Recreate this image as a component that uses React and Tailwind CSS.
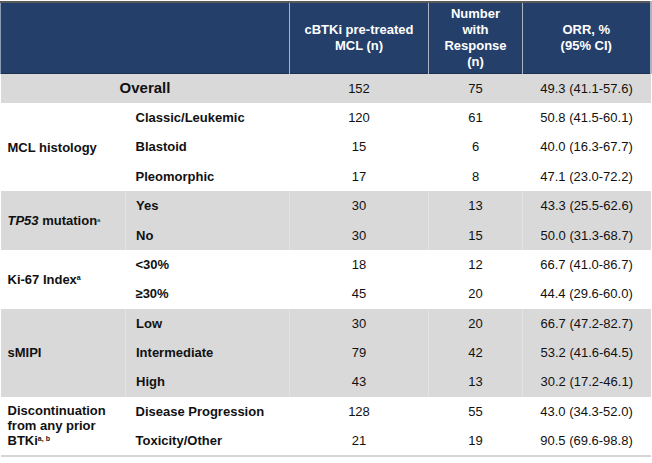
import React from 'react';

const NAVY = 'bg-[#253f6b]';

// one entry per group; rows are [label, n, responders, orr]
const GROUPS = [
  {
    label: (
      <>MCL histology</>
    ),
    shaded: false,
    rows: [
      ['Classic/Leukemic', '120', '61', '50.8 (41.5-60.1)'],
      ['Blastoid', '15', '6', '40.0 (16.3-67.7)'],
      ['Pleomorphic', '17', '8', '47.1 (23.0-72.2)'],
    ],
  },
  {
    label: (
      <>
        <i>TP53</i> mutation
        <span className="relative -top-[3px] text-[6px] font-normal leading-none">a</span>
      </>
    ),
    shaded: true,
    rows: [
      ['Yes', '30', '13', '43.3 (25.5-62.6)'],
      ['No', '30', '15', '50.0 (31.3-68.7)'],
    ],
  },
  {
    label: (
      <>
        Ki-67 Index<span className="relative -top-[4px] text-[7px] leading-none">a</span>
      </>
    ),
    shaded: false,
    rows: [
      ['<30%', '18', '12', '66.7 (41.0-86.7)'],
      ['≥30%', '45', '20', '44.4 (29.6-60.0)'],
    ],
  },
  {
    label: <>sMIPI</>,
    shaded: true,
    rows: [
      ['Low', '30', '20', '66.7 (47.2-82.7)'],
      ['Intermediate', '79', '42', '53.2 (41.6-64.5)'],
      ['High', '43', '13', '30.2 (17.2-46.1)'],
    ],
  },
  {
    label: (
      <>
        Discontinuation
        <br />
        from any prior
        <br />
        BTKi<span className="relative -top-[4px] text-[7px] leading-none">a, b</span>
      </>
    ),
    shaded: false,
    rows: [
      ['Disease Progression', '128', '55', '43.0 (34.3-52.0)'],
      ['Toxicity/Other', '21', '19', '90.5 (69.6-98.8)'],
    ],
  },
];

export default function App() {
  return (
    <div className="w-[652px] h-[463px] bg-white pt-px font-['Liberation_Sans',Arial,sans-serif] text-[13px] text-[#111]">
      <table className="w-[650px] table-fixed border-collapse">
        <colgroup>
          <col className="w-[125px]" />
          <col className="w-[164px]" />
          <col className="w-[139px]" />
          <col className="w-[94px]" />
          <col className="w-[128px]" />
        </colgroup>
        <thead>
          <tr className={`h-[71px] ${NAVY} text-white font-bold leading-[16px] border-t-2 border-t-[#5b5b5b] border-b border-b-[#1c2f50]`}>
            <th colSpan={2} className="border-l border-l-[#8b9bb5]" />
            <th className="border-l border-l-[#a9b3c3] text-center font-bold">
              cBTKi pre-treated
              <br />
              MCL (n)
            </th>
            <th className="border-l border-l-[#a9b3c3] text-center font-bold">
              Number
              <br />
              with
              <br />
              Response
              <br />
              (n)
            </th>
            <th className="border-l border-l-[#a9b3c3] border-r-2 border-r-[#a9b3c3] text-center font-bold">
              ORR, %
              <br />
              (95% CI)
            </th>
          </tr>
        </thead>
        <tbody>
          <tr className="h-[30px] bg-[#d9d9d9]">
            <td colSpan={2} className="text-center font-bold text-[15px]">
              Overall
            </td>
            <td className="text-center">152</td>
            <td className="text-center">75</td>
            <td className="text-center">49.3 (41.1-57.6)</td>
          </tr>
          {GROUPS.map((g, gi) =>
            g.rows.map((r, ri) => (
              <tr
                key={`${gi}-${ri}`}
                className={`h-[29.4px] ${g.shaded ? 'bg-[#d9d9d9]' : 'bg-white'} ${
                  gi === GROUPS.length - 1 && ri === g.rows.length - 1 ? 'border-b-2 border-b-[#d6d6d6]' : ''
                }`}
              >
                {ri === 0 && (
                  <td
                    rowSpan={g.rows.length}
                    className={`pl-[7px] font-bold leading-[15px] ${g.shaded ? 'border-r border-r-[#e3e3e3]' : ''}`}
                  >
                    {g.label}
                  </td>
                )}
                <td className={`pl-[10px] font-bold ${g.shaded ? 'border-r border-r-[#e3e3e3]' : ''}`}>{r[0]}</td>
                <td className={`text-center ${g.shaded ? 'border-r border-r-[#e3e3e3]' : ''}`}>{r[1]}</td>
                <td className={`text-center ${g.shaded ? 'border-r border-r-[#e3e3e3]' : ''}`}>{r[2]}</td>
                <td className="text-center">{r[3]}</td>
              </tr>
            ))
          )}
        </tbody>
      </table>
    </div>
  );
}
